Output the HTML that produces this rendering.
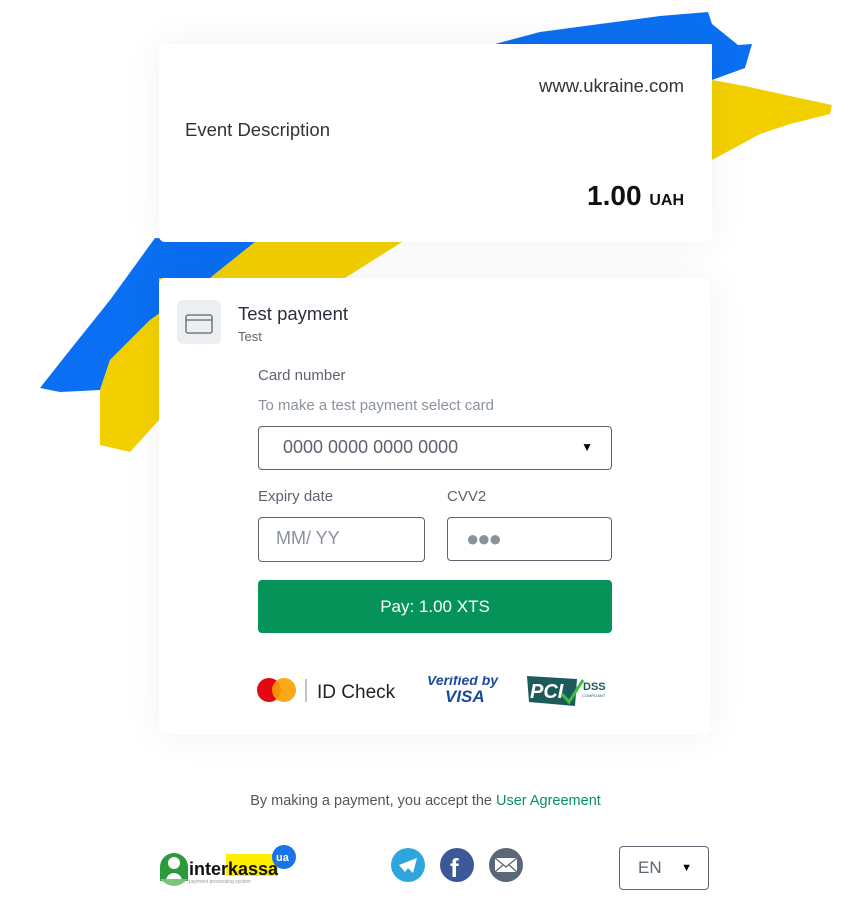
<!DOCTYPE html>
<html><head><meta charset="utf-8"><style>
*{box-sizing:border-box;margin:0;padding:0}
body{width:851px;height:902px;background:#fff;font-family:"Liberation Sans",sans-serif;position:relative;overflow:hidden;color:#2a2f38}
.card{position:absolute;background:#fff;border-radius:6px;box-shadow:0 0 40px rgba(0,0,0,0.06)}
.abs{position:absolute}
.inp{position:absolute;border:1px solid #5c6470;border-radius:4px;height:43px;font-size:17px;color:#5c6470;padding-left:24px;line-height:41px}
.lbl{position:absolute;font-size:15px;color:#5c6470}
</style></head><body>
<svg class="abs" style="left:0;top:0" width="851" height="902">
<polygon fill="#0a6ff2" points="495,44 540,32 600,24 660,16 708,12 712,24 738,45 752,44 745,68 712,80 712,44"/>
<polygon fill="#f2d000" points="712,80 745,86 790,96 832,105 830,114 790,124 760,134 712,160"/>
<polygon fill="#0a6ff2" points="155,238 255,242 210,278 150,320 110,360 100,390 60,392 40,388 70,350 110,300"/>
<polygon fill="#f2d000" points="255,242 402,242 345,278 159,278 159,420 130,452 100,445 100,390 110,360 150,320 210,278"/>
</svg>
<div class="card" style="left:159px;top:44px;width:553px;height:198px">
<div class="abs" style="right:28px;top:31px;font-size:18.5px;color:#333">www.ukraine.com</div>
<div class="abs" style="left:26px;top:75px;font-size:18.5px;color:#333">Event Description</div>
<div class="abs" style="right:28px;top:136px;font-size:28px;font-weight:bold;color:#111">1.00 <span style="font-size:16px">UAH</span></div>
</div>
<div class="card" style="left:159px;top:278px;width:552px;height:457px">
<div class="abs" style="left:18px;top:22px;width:44px;height:44px;background:#eceef2;border-radius:6px">
<svg width="44" height="44"><rect x="9" y="15" width="26" height="18" rx="2" fill="none" stroke="#5c6470" stroke-width="1.3"/><line x1="9" y1="20" x2="35" y2="20" stroke="#5c6470" stroke-width="1.3"/></svg></div>
<div class="abs" style="left:79px;top:25px;font-size:18.5px;color:#2a2f38">Test payment</div>
<div class="abs" style="left:79px;top:51px;font-size:13px;color:#5c6470">Test</div>
<div class="lbl" style="left:99px;top:89px">Card number</div>
<div class="lbl" style="left:99px;top:119px;color:#8a929c">To make a test payment select card</div>
<div class="inp" style="left:99px;top:148px;width:354px;height:44px;font-size:18px">0000 0000 0000 0000<span class="abs" style="right:18px;top:0;font-size:12px;color:#000">▼</span></div>
<div class="lbl" style="left:99px;top:210px">Expiry date</div>
<div class="lbl" style="left:288px;top:210px">CVV2</div>
<div class="inp" style="left:99px;top:239px;width:167px;height:45px;color:#8a929c;font-size:18px;padding-left:17px">MM/ YY</div>
<div class="inp" style="left:288px;top:239px;width:165px;height:44px;color:#8a929c;padding-left:18px;font-size:22px;letter-spacing:-2px">●●●</div>
<div class="abs" style="left:99px;top:302px;width:354px;height:53px;background:#05935a;border-radius:4px;color:#fff;font-size:17px;text-align:center;line-height:53px">Pay: 1.00 XTS</div>
<svg class="abs" style="left:98px;top:398px" width="360" height="32">
<circle cx="12" cy="14" r="12" fill="#e30613"/><circle cx="27" cy="14" r="12" fill="#f9a000" opacity="0.9"/>
<line x1="49" y1="3" x2="49" y2="26" stroke="#888"/>
<text x="60" y="22" font-family="Liberation Sans" font-size="19" fill="#222">ID Check</text>
<text x="170" y="9" font-family="Liberation Sans" font-size="14" font-style="italic" font-weight="bold" fill="#1a4a9c">Verified by</text>
<text x="188" y="26" font-family="Liberation Sans" font-size="17" font-style="italic" font-weight="bold" fill="#1a4a9c">VISA</text>
<polygon points="270,0 320,3 318,30 272,26" fill="#1d5b5b"/>
<text x="273" y="22" font-family="Liberation Sans" font-size="20" font-weight="bold" font-style="italic" fill="#fff">PCI</text>
<path d="M305,18 L312,26 L326,4" stroke="#3cbf3c" stroke-width="3" fill="none"/>
<text x="326" y="14" font-family="Liberation Sans" font-size="11" font-weight="bold" fill="#1d5b5b">DSS</text>
<text x="325" y="21" font-family="Liberation Sans" font-size="4" fill="#1d5b5b">COMPLIANT</text>
</svg>
</div>
<div class="abs" style="left:0;width:851px;top:793px;text-align:center;font-size:14.5px;color:#555">By making a payment, you accept the <span style="color:#05935a">User Agreement</span></div>
<svg class="abs" style="left:158px;top:845px" width="140" height="46">
<path d="M2,22 a14,14 0 0 1 28,0 v14 h-28z" fill="#2a9a3a"/><circle cx="16" cy="18" r="6" fill="#fff"/><path d="M8,36 a8,8 0 0 1 16,0z" fill="#fff"/>
<path d="M2,34 q14,14 28,0" fill="#7cc47c"/>
<rect x="68" y="9" width="52" height="22" fill="#ffee00"/>
<text x="31" y="30" font-family="Liberation Sans" font-size="18" font-weight="bold" fill="#111">interkassa</text>
<text x="31" y="38" font-family="Liberation Sans" font-size="5" fill="#999">payment processing system</text>
<circle cx="126" cy="12" r="12" fill="#1a73e8"/><text x="118" y="16" font-family="Liberation Sans" font-size="11" font-weight="bold" fill="#fff">ua</text>
</svg>
<svg class="abs" style="left:390px;top:847px" width="136" height="36">
<circle cx="18" cy="18" r="17" fill="#2ea6dd"/><path d="M9,18 L27,11 L23,26 L18,21 L15,25z" fill="#fff"/>
<circle cx="67" cy="18" r="17" fill="#3b5998"/><text x="60" y="30" font-family="Liberation Sans" font-size="26" font-weight="bold" fill="#fff">f</text>
<circle cx="116" cy="18" r="17" fill="#5a6778"/><rect x="105" y="11" width="22" height="14" fill="#fff"/><path d="M105,11 L116,20 L127,11 M105,25 L113,18 M127,25 L119,18" stroke="#5a6778" stroke-width="1.3" fill="none"/>
</svg>
<div class="abs" style="left:619px;top:846px;width:90px;height:44px;border:1px solid #5c6470;border-radius:4px;font-size:17px;color:#5c6470;line-height:42px;padding-left:18px">EN<span class="abs" style="right:16px;top:0;font-size:11px;color:#000">▼</span></div>
</body></html>
